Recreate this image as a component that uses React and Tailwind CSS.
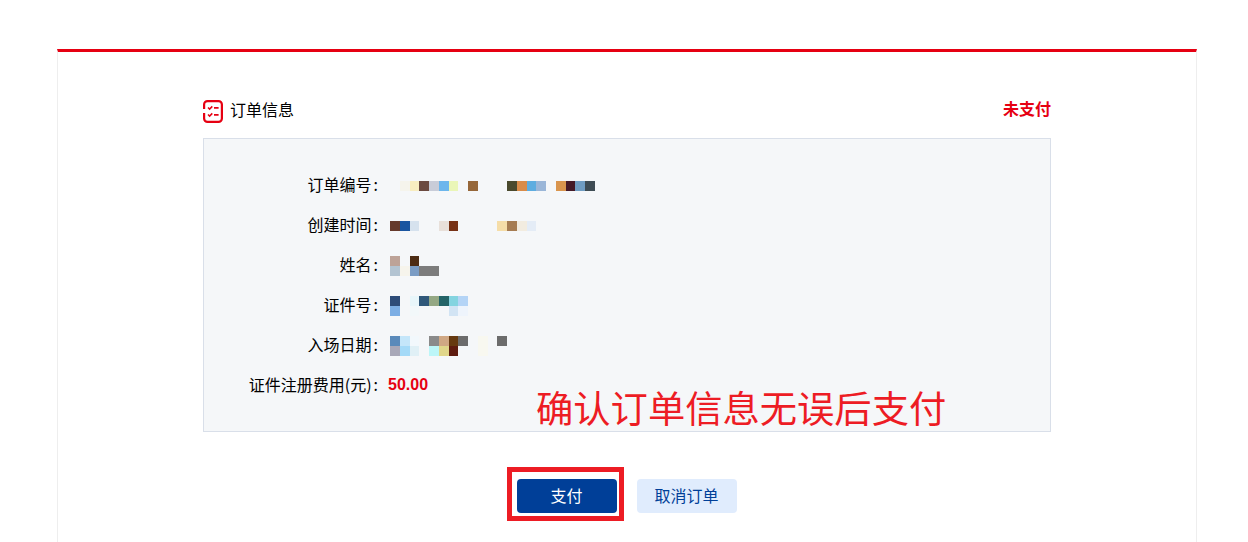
const orderRows = [
  {
    label: "订单编号",
    cells: [
      [null, "#f5f4ec", "#f8edc0", "#6b4a40", "#c8ccd8", "#6cb6ec", "#eaf6b8", null, "#96673a", null, null, null, "#4a4a2e", "#d98c4a", "#5dade0", "#9ab6d8", null, "#d9954e", "#451a28", "#6f9cc2", "#3e4c54"],
    ],
  },
  {
    label: "创建时间",
    cells: [
      ["#653a2c", "#1a55a0", "#d6e2ee", null, null, "#e8e0da", "#773216", null, null, null, null, "#f5dda8", "#a67c52", "#f2ece0", "#e4ecf6"],
    ],
  },
  {
    label: "姓名",
    cells: [
      ["#bda398", null, "#4d2c14"],
      ["#b3c4d2", "#f6f4ec", "#7a9cc4", "#7c7c7c", "#7c7c7c"],
    ],
  },
  {
    label: "证件号",
    cells: [
      ["#2d4c78", null, "#e8f6fa", "#30587a", "#94a884", "#246468", "#84d4e0", "#b4d4f6"],
      ["#7caee4", null, "#f2f8fa", null, null, null, "#d2e4f4", "#eef4fc"],
    ],
  },
  {
    label: "入场日期",
    cells: [
      ["#5a8aba", "#c4e6fa", "#f2f8fc", null, "#8a8a8a", "#d0a884", "#663a10", "#6c6c6c", null, "#f8f8f0", null, "#6c6c6c"],
      ["#a8a8b8", "#a4daf8", "#e0f0f6", null, "#bcf6f8", "#e0d68a", "#5e1c10", null, null, "#f8f8f0"],
    ],
  },
];

function Mosaic({ rows }) {
  return (
    <div className="flex flex-col">
      {rows.map((row, i) => (
        <div key={i} className="flex">
          {row.map((color, j) => (
            <div key={j} className="w-[9.75px] h-[9.75px]" style={{ backgroundColor: color || "transparent" }} />
          ))}
        </div>
      ))}
    </div>
  );
}

function OrderIcon() {
  return (
    <svg width="20" height="23" viewBox="0 0 20 23" fill="none" stroke="#e60012" strokeWidth="2.2">
      <path d="M1.1 9V4.5a3.4 3.4 0 0 1 3.4-3.4h11a3.4 3.4 0 0 1 3.4 3.4v14a3.4 3.4 0 0 1-3.4 3.4h-11a3.4 3.4 0 0 1-3.4-3.4v-5.5" />
      <path d="M5 7.5l1.6 1.6 2.7-2.7M5 14.5l1.6 1.6 2.7-2.7" strokeWidth="1.5" />
      <path d="M11 7.8h4.6M11 14.8h4.6" strokeWidth="1.8" />
    </svg>
  );
}

function Label({ children }) {
  return (
    <div className="w-[175px] text-right text-base leading-[18px] pb-[5px] whitespace-nowrap">
      {children}
      <span className="ml-[2px] mr-[1px]">:</span>
    </div>
  );
}

export default function App() {
  return (
    <div className="relative h-[542px] overflow-hidden bg-white font-['Noto_Sans_CJK_SC','Liberation_Sans',sans-serif] text-[#000]">
      <div className="ml-[57px] mr-[51px] mt-[49px] h-[493px] border-x border-[#eeeeee] border-t-[3px] border-t-[#e60012] px-[145px] pt-[48px]">
        <div className="flex items-center justify-between h-[22px] mb-[16px]">
          <div className="flex items-center gap-[7px]">
            <OrderIcon />
            <span className="text-base leading-[18px] pb-[5px]">订单信息</span>
          </div>
          <span className="text-base leading-[18px] pb-[6px] font-bold text-[#e60012]">未支付</span>
        </div>

        <div className="h-[294px] border border-[#d9dfe9] bg-[#f5f7f9] pt-[27px]">
          {orderRows.map((row) => (
            <div key={row.label} className="flex items-center h-[40px]">
              <Label>{row.label}</Label>
              <div className="ml-[11px]">
                <Mosaic rows={row.cells} />
              </div>
            </div>
          ))}
          <div className="flex items-center h-[40px]">
            <Label>证件注册费用(元)</Label>
            <div className="ml-[9px] text-base leading-[18px] pb-[3px] font-bold text-[#e60012] font-['Liberation_Sans',sans-serif]">50.00</div>
          </div>
        </div>

        <div className="flex justify-center gap-5 mt-[47px] pr-[1px]">
          <button className="relative w-[100px] h-[34px] rounded bg-[#003f98] text-base text-white pb-[2px]">
            支付
            <span className="absolute -left-[10px] -right-[7px] -top-[12px] -bottom-[8px] border-[5px] border-[#ed1c24]" />
          </button>
          <button className="w-[100px] h-[34px] rounded bg-[#e0ecfd] text-base text-[#003f98] pb-[2px]">取消订单</button>
        </div>
      </div>

      <div className="absolute left-[536px] top-[383px] text-[37.3px] leading-[48px] text-[#ed1c24] whitespace-nowrap">
        确认订单信息无误后支付
      </div>
    </div>
  );
}
